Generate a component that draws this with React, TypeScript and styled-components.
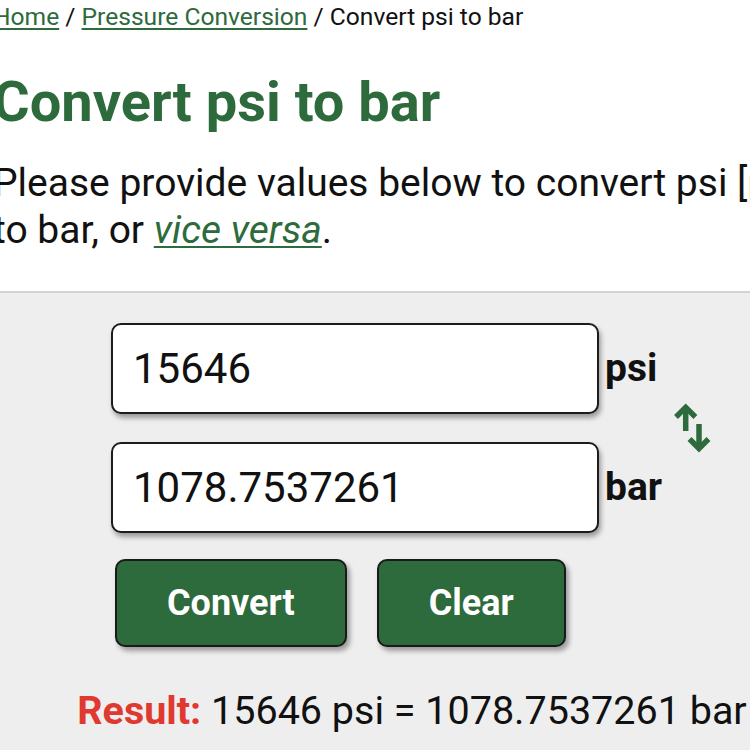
import React from "react";
import styled, { createGlobalStyle } from "styled-components";

const GREEN = "#2d6a3c";

const GlobalStyle = createGlobalStyle`
  html, body {
    margin: 0;
    padding: 0;
    background: #ffffff;
    overflow: hidden;
  }
  body {
    font-family: Roboto, "Noto Sans", Arial, sans-serif;
    color: #111;
  }
`;

const Page = styled.div`
  width: 834px;
  margin-left: -7px;
  min-height: 750px;
  display: flex;
  flex-direction: column;
`;

const Breadcrumb = styled.nav`
  font-size: 24.6px;
  line-height: 1.2;
  padding-top: 2px;
  color: #111;
  white-space: nowrap;
`;

const Link = styled.a`
  color: ${GREEN};
  text-decoration: underline;
  text-underline-offset: 3px;
  text-decoration-thickness: 2px;
`;

const ItalicLink = styled(Link)`
  font-style: italic;
`;

const Title = styled.h1`
  margin: 37px 0 0;
  font-size: 56px;
  font-weight: 700;
  line-height: 1.2;
  color: ${GREEN};
`;

const Intro = styled.p`
  margin: 24px 0 0;
  font-size: 39px;
  line-height: 47px;
  color: #111;
`;

const Panel = styled.section`
  margin-top: 37px;
  flex: 1;
  border-top: 2px solid #d4d4d4;
  background: #eeeeee;
  padding-top: 30px;
  display: flex;
  flex-direction: column;
  align-items: center;
`;

const Form = styled.div`
  display: flex;
  flex-direction: column;
  width: 598px;
`;

const FieldRow = styled.div`
  display: flex;
  align-items: center;
  gap: 11px;
`;

const FieldGrid = styled.div`
  display: grid;
  grid-template-columns: 488px auto;
  column-gap: 6px;
  row-gap: 28px;
  align-items: center;
`;

const ValueInput = styled.input`
  box-sizing: border-box;
  width: 488px;
  height: 91px;
  border: 2px solid #1c1c1c;
  border-radius: 10px;
  background: #fff;
  padding: 0 20px;
  font-family: Roboto, sans-serif;
  font-size: 42px;
  color: #111;
  box-shadow: 2px 4px 5px rgba(0, 0, 0, 0.35);
  outline: none;
`;

const UnitLabel = styled.label`
  font-size: 39px;
  font-weight: 700;
  color: #111;
`;

const SwapIcon = styled.svg`
  width: 38px;
  height: 50px;
  flex: none;
`;

const ButtonRow = styled.div`
  display: flex;
  gap: 30px;
  margin-top: 26px;
  padding-left: 4px;
`;

const Button = styled.button`
  height: 88px;
  padding: 0 50px;
  border: 2px solid #1a1a1a;
  border-radius: 10px;
  background: ${GREEN};
  color: #fff;
  font-family: Roboto, sans-serif;
  font-size: 36px;
  font-weight: 700;
  box-shadow: 3px 4px 5px rgba(0, 0, 0, 0.35);
  cursor: pointer;
`;

const Result = styled.div`
  margin-top: 40px;
  margin-left: 4px;
  font-size: 39.5px;
  line-height: 1.2;
  text-align: center;
  white-space: nowrap;
  color: #111;
`;

const ResultLabel = styled.span`
  color: #e0392f;
  font-weight: 700;
`;

export default function App() {
  return (
    <>
      <GlobalStyle />
      <Page>
        <Breadcrumb>
          <Link href="#">Home</Link> / <Link href="#">Pressure Conversion</Link> / Convert psi to bar
        </Breadcrumb>
        <Title>Convert psi to bar</Title>
        <Intro>
          Please provide values below to convert psi [psi] to bar, or <ItalicLink href="#">vice versa</ItalicLink>.
        </Intro>
        <Panel>
          <Form>
            <FieldRow>
              <FieldGrid>
                <ValueInput defaultValue="15646" />
                <UnitLabel>psi</UnitLabel>
                <ValueInput defaultValue="1078.7537261" />
                <UnitLabel>bar</UnitLabel>
              </FieldGrid>
              <SwapIcon viewBox="0 0 38 50" fill="none" stroke={GREEN} strokeWidth="5.5">
                <path d="M12.7 4 V28" />
                <path d="M3 14 L12.7 4.3 L22.4 14" />
                <path d="M26 21 V45" />
                <path d="M16.5 36 L26 45.5 L35.5 36" />
              </SwapIcon>
            </FieldRow>
            <ButtonRow>
              <Button>Convert</Button>
              <Button>Clear</Button>
            </ButtonRow>
          </Form>
          <Result>
            <ResultLabel>Result:</ResultLabel> 15646 psi = 1078.7537261 bar
          </Result>
        </Panel>
      </Page>
    </>
  );
}
